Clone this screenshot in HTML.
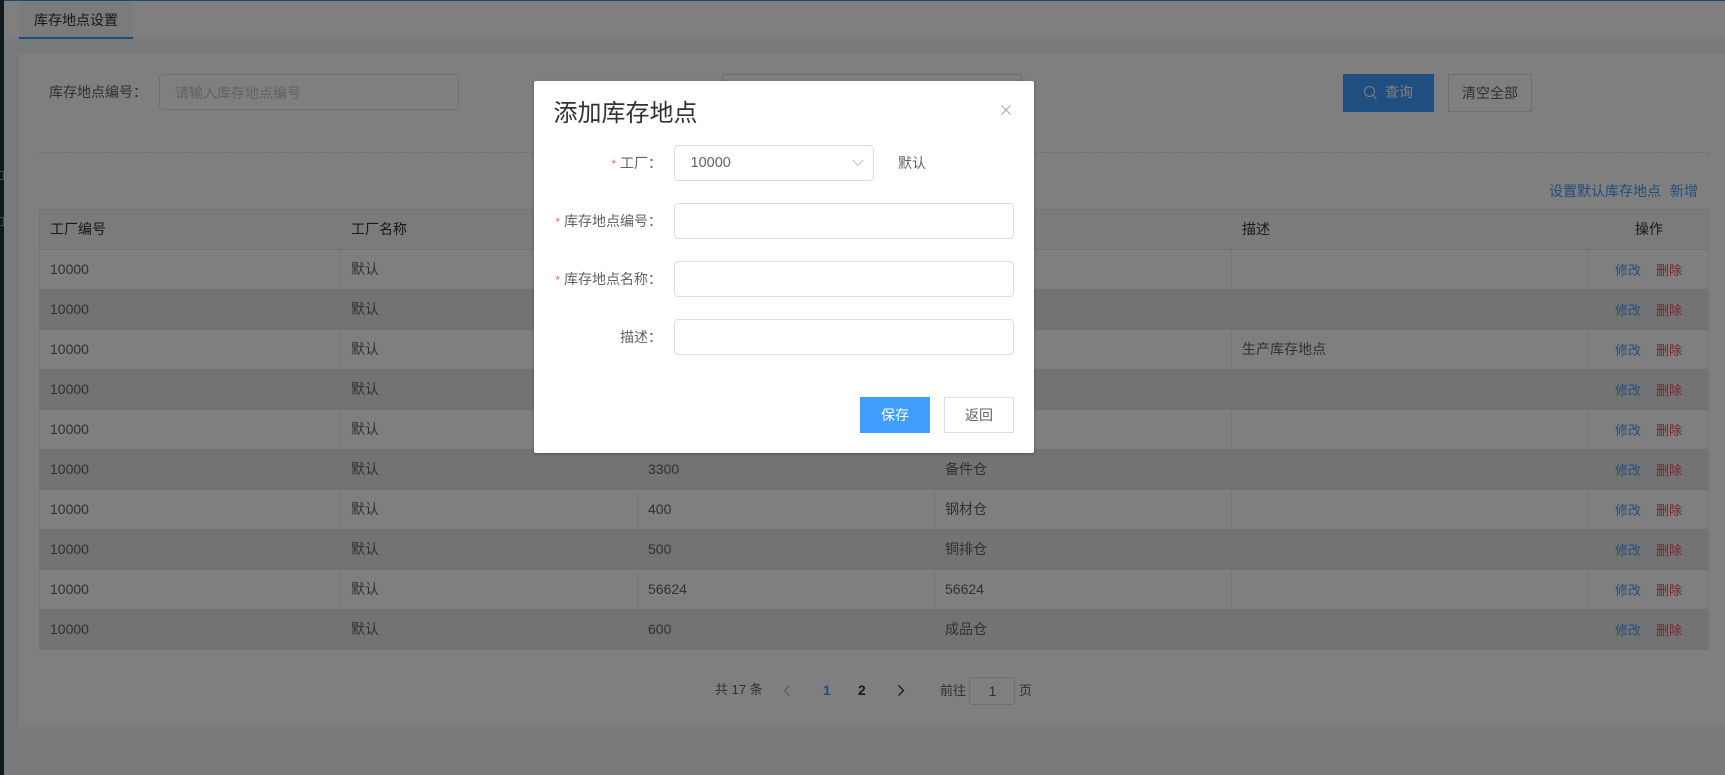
<!DOCTYPE html>
<html lang="zh-CN">
<head>
<meta charset="utf-8">
<title>库存地点设置</title>
<style>
html,body{margin:0;padding:0;width:1725px;height:775px;overflow:hidden;background:#f0f2f5;}
*{box-sizing:border-box;}
body{position:relative;font-family:"Liberation Sans","Noto Sans CJK SC",sans-serif;font-size:14px;color:#606266;}
.a{position:absolute;white-space:nowrap;}
#strip{left:0;top:0;width:4px;height:775px;background:#22323a;}
#topline{left:0;top:0;width:1725px;height:1px;background:#3f8fdc;}
#tabbar{left:4px;top:1px;width:1721px;height:38px;background:#fff;}
#tab{left:19px;top:1px;width:114px;height:38px;background:#f5f7fa;border-bottom:2px solid #409eff;color:#303133;line-height:39px;text-align:center;}
#panel{left:19px;top:54px;width:1706px;height:673px;background:#fff;}
.inp{border:1px solid #dcdfe6;border-radius:4px;background:#fff;}
#dash{left:39px;top:152px;width:1670px;border-top:1px dashed #dcdfe6;height:0;}
#tbl{left:39px;top:209px;width:1670px;height:441px;}
.row{position:absolute;left:0;width:1670px;height:40px;border-bottom:1px solid #dfe2e8;line-height:39px;background:#fff;}
.row.s{background:#e6e6e6;}
.row.h{top:0;height:41px;background:#f5f7fa;color:#303133;border:1px solid #e4e7ed;border-bottom:1px solid #dfe2e8;line-height:39px;}
.row span{position:absolute;top:0;white-space:nowrap;}
.row i{position:absolute;top:0;bottom:0;width:1px;background:#ebeef5;}
.row.s i{background:#e4e4e4;}
.l{left:0;}
.c1{left:11px}.c2{left:312px}.c3{left:609px}.c4{left:906px}.c5{left:1203px}
.e{font-size:13px;left:1576px;color:#409eff;top:1px !important;}
.d{font-size:13px;left:1617px;color:#f34d4d;top:1px !important;}
#overlay{left:0;top:0;width:1725px;height:775px;background:rgba(0,0,0,.5);}
#modal{left:534px;top:81px;width:500px;height:372px;background:#fff;border-radius:2px;box-shadow:0 1px 3px rgba(0,0,0,.3);}
.m{position:absolute;white-space:nowrap;}
.lab{position:absolute;right:372px;line-height:20px;height:20px;color:#606266;}
.star{color:#f56c6c;margin-right:4px;font-size:12px;}
.btn{position:absolute;text-align:center;font-size:14px;}
</style>
</head>
<body>
<div class="a" id="tabbar"></div>
<div class="a" id="topline"></div>
<div class="a" id="strip"></div>
<div class="a" style="left:0;top:171px;width:4px;height:9px;border:1px solid #6f8a99;border-left:0;"></div>
<div class="a" style="left:0;top:217px;width:4px;height:9px;border:1px solid #6f8a99;border-left:0;"></div>
<div class="a" id="tab">库存地点设置</div>
<div class="a" id="panel"></div>

<div class="a" style="left:49px;top:82px;line-height:20px;">库存地点编号：</div>
<div class="a inp" style="left:159px;top:74px;width:300px;height:36px;padding-left:15px;line-height:36px;color:#c0c4cc;">请输入库存地点编号</div>
<div class="a inp" style="left:722px;top:74px;width:300px;height:36px;"></div>
<div class="a" style="left:1343px;top:74px;width:91px;height:38px;background:#409eff;color:#fff;line-height:37px;padding-left:42px;">查询</div>
<svg class="a" style="left:1363px;top:85px;" width="15" height="16" viewBox="0 0 15 16" fill="none" stroke="#fff" stroke-width="1"><circle cx="6.5" cy="6.5" r="5"/><path d="M10 10.2l3.4 3.8"/></svg>
<div class="a" style="left:1448px;top:74px;width:84px;height:38px;border:1px solid #dcdfe6;background:#fff;text-align:center;line-height:37px;">清空全部</div>
<div class="a" id="dash"></div>
<div class="a" style="left:1549px;top:181px;line-height:20px;color:#409eff;font-size:14px;">设置默认库存地点</div>
<div class="a" style="left:1670px;top:181px;line-height:20px;color:#409eff;font-size:14px;">新增</div>

<div class="a" id="tbl">
  <div class="row h" style="left:0;">
    <span style="left:10px">工厂编号</span><span style="left:311px">工厂名称</span><span style="left:1202px">描述</span><span style="left:1595px;">操作</span>
    <i style="left:300px"></i><i style="left:1191px"></i><i style="left:1548px"></i>
  </div>
  <div class="row" style="top:41px"><i class="l"></i><i style="left:301px"></i><i style="left:1192px"></i><i style="left:1549px"></i><i style="left:1669px"></i><span class="c1">10000</span><span class="c2">默认</span><span class="e">修改</span><span class="d">删除</span></div>
  <div class="row s" style="top:81px"><span class="c1">10000</span><span class="c2">默认</span><span class="e">修改</span><span class="d">删除</span></div>
  <div class="row" style="top:121px"><i class="l"></i><i style="left:301px"></i><i style="left:1192px"></i><i style="left:1549px"></i><i style="left:1669px"></i><span class="c1">10000</span><span class="c2">默认</span><span class="c5">生产库存地点</span><span class="e">修改</span><span class="d">删除</span></div>
  <div class="row s" style="top:161px"><span class="c1">10000</span><span class="c2">默认</span><span class="e">修改</span><span class="d">删除</span></div>
  <div class="row" style="top:201px"><i class="l"></i><i style="left:301px"></i><i style="left:1192px"></i><i style="left:1549px"></i><i style="left:1669px"></i><span class="c1">10000</span><span class="c2">默认</span><span class="e">修改</span><span class="d">删除</span></div>
  <div class="row s" style="top:241px"><span class="c1">10000</span><span class="c2">默认</span><span class="c3">3300</span><span class="c4">备件仓</span><span class="e">修改</span><span class="d">删除</span></div>
  <div class="row" style="top:281px"><i class="l"></i><i style="left:301px"></i><i style="left:598px"></i><i style="left:895px"></i><i style="left:1192px"></i><i style="left:1549px"></i><i style="left:1669px"></i><span class="c1">10000</span><span class="c2">默认</span><span class="c3">400</span><span class="c4">钢材仓</span><span class="e">修改</span><span class="d">删除</span></div>
  <div class="row s" style="top:321px"><span class="c1">10000</span><span class="c2">默认</span><span class="c3">500</span><span class="c4">铜排仓</span><span class="e">修改</span><span class="d">删除</span></div>
  <div class="row" style="top:361px"><i class="l"></i><i style="left:301px"></i><i style="left:598px"></i><i style="left:895px"></i><i style="left:1192px"></i><i style="left:1549px"></i><i style="left:1669px"></i><span class="c1">10000</span><span class="c2">默认</span><span class="c3">56624</span><span class="c4">56624</span><span class="e">修改</span><span class="d">删除</span></div>
  <div class="row s" style="top:401px;border-bottom:0;"><span class="c1">10000</span><span class="c2">默认</span><span class="c3">600</span><span class="c4">成品仓</span><span class="e">修改</span><span class="d">删除</span></div>
</div>

<div class="a" style="left:715px;top:680px;line-height:20px;font-size:13px;">共 17 条</div>
<svg class="a" style="left:782px;top:684px;" width="10" height="13" viewBox="0 0 10 13" fill="none" stroke="#c0c4cc" stroke-width="1.3"><path d="M7.5 1.5L2.5 6.5l5 5"/></svg>
<div class="a" style="left:823px;top:680px;line-height:20px;font-weight:bold;color:#409eff;font-size:14px;">1</div>
<div class="a" style="left:858px;top:680px;line-height:20px;font-weight:bold;color:#303133;font-size:14px;">2</div>
<svg class="a" style="left:896px;top:684px;" width="10" height="13" viewBox="0 0 10 13" fill="none" stroke="#303133" stroke-width="1.3"><path d="M2.5 1.5L7.5 6.5l-5 5"/></svg>
<div class="a" style="left:940px;top:681px;line-height:20px;font-size:13px;">前往</div>
<div class="a inp" style="left:969px;top:677px;width:46px;height:28px;border-radius:3px;text-align:center;line-height:26px;font-size:14px;padding-left:1px;">1</div>
<div class="a" style="left:1019px;top:681px;line-height:20px;font-size:13px;">页</div>

<div class="a" id="overlay"></div>

<div class="a" id="modal">
  <div class="m" style="left:19.5px;top:17px;font-size:24px;line-height:32px;color:#303133;">添加库存地点</div>
  <svg class="m" style="left:466px;top:23px;" width="12" height="12" viewBox="0 0 12 12" fill="none" stroke="#a0a3aa" stroke-width="1"><path d="M1.5 1.5l9 9M10.5 1.5l-9 9"/></svg>

  <div class="lab" style="top:72px;"><span class="star">*</span>工厂：</div>
  <div class="m inp" style="left:140px;top:64px;width:200px;height:36px;padding-left:15.5px;line-height:35px;font-size:14.5px;">10000
    <svg style="position:absolute;right:9px;top:13px;" width="12" height="8" viewBox="0 0 12 8" fill="none" stroke="#c0c4cc" stroke-width="1"><path d="M1 1l5 5.5L11 1"/></svg>
  </div>
  <div class="m" style="left:364px;top:72px;line-height:20px;">默认</div>

  <div class="lab" style="top:130px;"><span class="star">*</span>库存地点编号：</div>
  <div class="m inp" style="left:140px;top:122px;width:340px;height:36px;"></div>

  <div class="lab" style="top:188px;"><span class="star">*</span>库存地点名称：</div>
  <div class="m inp" style="left:140px;top:180px;width:340px;height:36px;"></div>

  <div class="lab" style="top:246px;">描述：</div>
  <div class="m inp" style="left:140px;top:238px;width:340px;height:36px;"></div>

  <div class="btn" style="left:326px;top:316px;width:70px;height:36px;background:#409eff;color:#fff;line-height:37px;">保存</div>
  <div class="btn" style="left:410px;top:316px;width:70px;height:36px;background:#fff;border:1px solid #dcdfe6;color:#606266;line-height:35px;">返回</div>
</div>
</body>
</html>
